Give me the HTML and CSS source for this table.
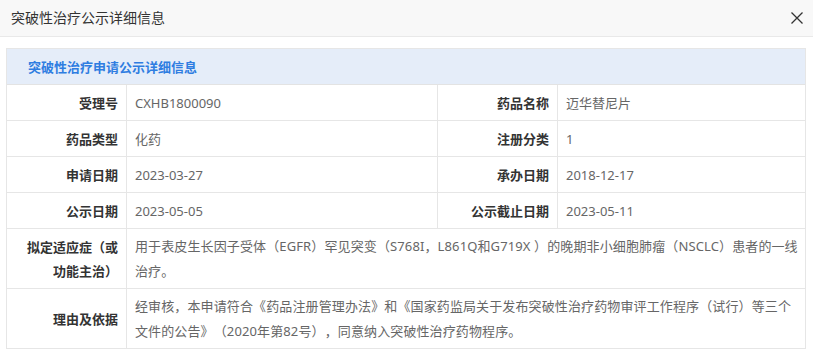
FILE: index.html
```html
<!DOCTYPE html>
<html lang="zh-CN">
<head>
<meta charset="utf-8">
<title>突破性治疗公示详细信息</title>
<link rel="stylesheet" href="styles.css">
</head>
<body>
<div class="dialog">
  <div class="dialog-header">
    <span class="dialog-title">突破性治疗公示详细信息</span>
    <svg class="close" width="12" height="12" viewBox="0 0 12 12"><path d="M0.5 0.5L11.5 11.5M11.5 0.5L0.5 11.5" stroke="#333" stroke-width="1.3" fill="none"/></svg>
  </div>
  <div class="dialog-body">
    <div class="panel">
      <div class="panel-head">突破性治疗申请公示详细信息</div>
      <div class="grid">
        <div class="lbl">受理号</div><div class="val">CXHB1800090</div>
        <div class="lbl">药品名称</div><div class="val last">迈华替尼片</div>
        <div class="lbl">药品类型</div><div class="val">化药</div>
        <div class="lbl">注册分类</div><div class="val last">1</div>
        <div class="lbl">申请日期</div><div class="val">2023-03-27</div>
        <div class="lbl">承办日期</div><div class="val last">2018-12-17</div>
        <div class="lbl">公示日期</div><div class="val">2023-05-05</div>
        <div class="lbl">公示截止日期</div><div class="val last">2023-05-11</div>
        <div class="lbl">拟定适应症（或功能主治）</div><div class="val wide">用于表皮生长因子受体（EGFR）罕见突变（S768I，L861Q和G719X ）的晚期非小细胞肺瘤（NSCLC）患者的一线治疗。</div>
        <div class="lbl">理由及依据</div><div class="val wide">经审核，本申请符合《药品注册管理办法》和《国家药监局关于发布突破性治疗药物审评工作程序（试行）等三个文件的公告》（2020年第82号），同意纳入突破性治疗药物程序。</div>
      </div>
    </div>
  </div>
</div>
</body>
</html>
```
FILE: styles.css
```css
* { box-sizing: border-box; }
html, body { margin: 0; padding: 0; background: #fff; }
body {
  font-family: "Noto Sans", "Noto Sans CJK SC", sans-serif;
  font-size: 13px;
  color: #666;
  text-spacing-trim: space-all;
}
.dialog-header {
  height: 37px;
  background: #f8f8f8;
  border-bottom: 1px solid #e9e9e9;
  display: flex;
  align-items: center;
  justify-content: space-between;
  padding: 0 10px 0 11px;
}
.dialog-title {
  font-size: 14px;
  color: #333;
  line-height: 20px;
}
.close { display: block; margin-top: -1px; }
.dialog-body {
  padding: 11px 7px 0 6px;
}
.panel {
  border: 1px solid #e6e6e6;
  border-bottom: none;
}
.panel-head {
  height: 36px;
  background: #e5edf9;
  color: #2f7de1;
  font-weight: 700;
  font-size: 13px;
  line-height: 36px;
  padding-left: 21px;
  border-bottom: 1px solid #e3e3e3;
}
.grid {
  display: grid;
  grid-template-columns: 120px 311px 120px 1fr;
}
.lbl, .val {
  border-bottom: 1px solid #e6e6e6;
  padding: 5.5px 8px;
  line-height: 24px;
  display: flex;
  align-items: center;
}
.lbl {
  border-right: 1px solid #e6e6e6;
  justify-content: flex-end;
  text-align: right;
  font-weight: 700;
  color: #333;
}
.val { border-right: 1px solid #e6e6e6; }
.val.last { border-right: none; }
.val.wide {
  grid-column: span 3;
  border-right: none;
  padding: 5px 6px 4px 8px;
  line-height: 25px;
  letter-spacing: 0.12px;
}
```
